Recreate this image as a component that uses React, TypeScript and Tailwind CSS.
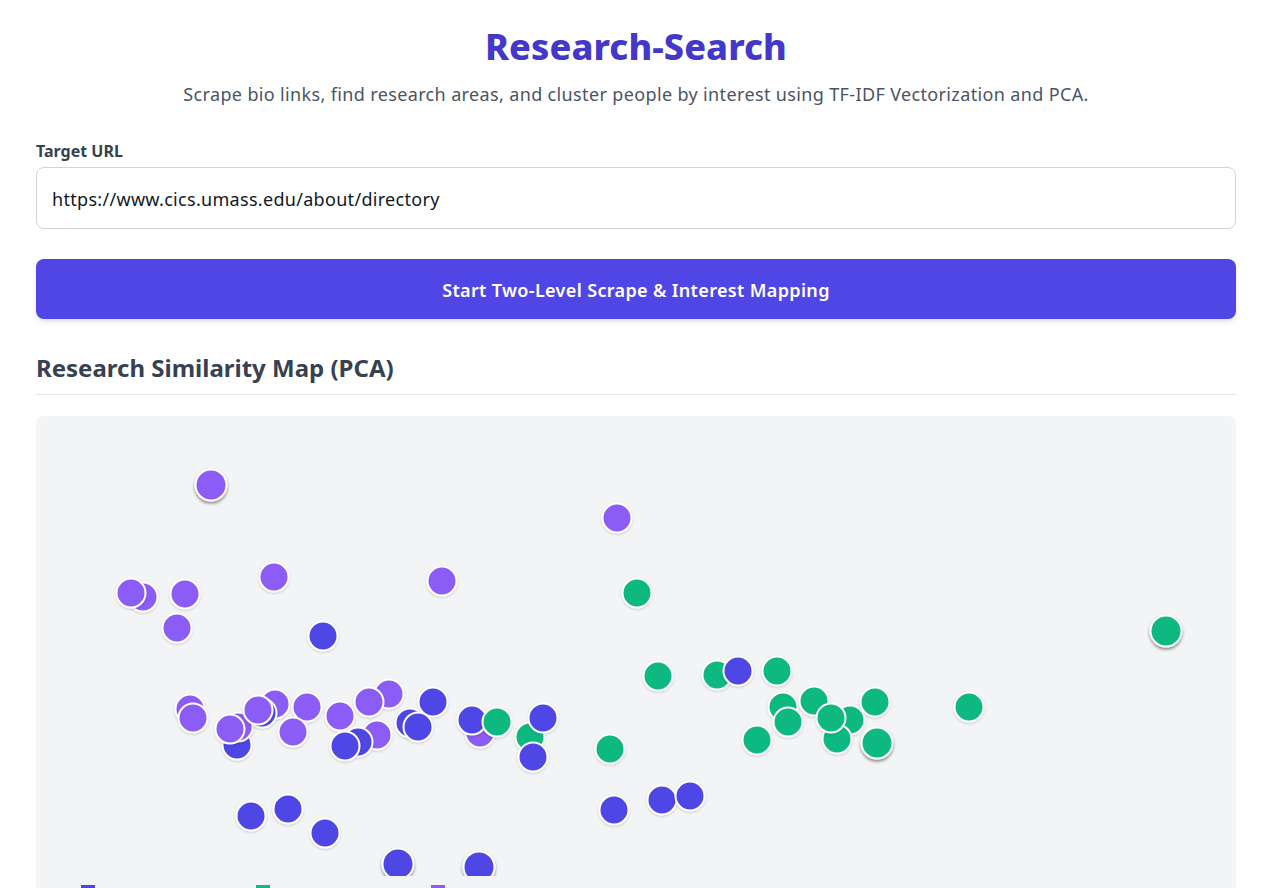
import React from "react";

type P = { x: number; y: number; c: "i" | "g" | "p"; s?: boolean };

const COLORS: Record<string, string> = { i: "#4f46e5", g: "#10b981", p: "#8b5cf6" };

// absolute page coordinates (converted below)
const points: P[] = [
  { x: 211, y: 485, c: "p", s: true },
  { x: 617, y: 518, c: "p" },
  { x: 274, y: 577, c: "p" },
  { x: 442, y: 581, c: "p" },
  { x: 143, y: 597, c: "p" },
  { x: 131, y: 593, c: "p" },
  { x: 185, y: 594, c: "p" },
  { x: 177, y: 628, c: "p" },
  { x: 323, y: 636, c: "i" },
  { x: 637, y: 593, c: "g" },
  { x: 1166, y: 631, c: "g", s: true },
  { x: 658, y: 676, c: "g" },
  { x: 969, y: 707, c: "g" },
  // left cluster
  { x: 237, y: 745, c: "i" },
  { x: 190, y: 709, c: "p" },
  { x: 193, y: 718, c: "p" },
  { x: 238, y: 727, c: "p" },
  { x: 230, y: 729, c: "p" },
  { x: 275, y: 704, c: "p" },
  { x: 262, y: 713, c: "i" },
  { x: 258, y: 710, c: "p" },
  { x: 307, y: 707, c: "p" },
  { x: 293, y: 732, c: "p" },
  { x: 340, y: 716, c: "p" },
  { x: 389, y: 694, c: "p" },
  { x: 369, y: 702, c: "p" },
  { x: 377, y: 735, c: "p" },
  { x: 358, y: 742, c: "i" },
  { x: 345, y: 746, c: "i" },
  { x: 433, y: 702, c: "i" },
  { x: 410, y: 723, c: "i" },
  { x: 418, y: 727, c: "i" },
  { x: 480, y: 733, c: "p" },
  { x: 472, y: 720, c: "i" },
  { x: 497, y: 722, c: "g" },
  { x: 530, y: 737, c: "g" },
  { x: 543, y: 718, c: "i" },
  { x: 533, y: 757, c: "i" },
  { x: 610, y: 749, c: "g" },
  // right cluster
  { x: 717, y: 675, c: "g" },
  { x: 738, y: 671, c: "i" },
  { x: 777, y: 671, c: "g" },
  { x: 783, y: 707, c: "g" },
  { x: 814, y: 701, c: "g" },
  { x: 850, y: 720, c: "g" },
  { x: 837, y: 739, c: "g" },
  { x: 831, y: 718, c: "g" },
  { x: 788, y: 722, c: "g" },
  { x: 875, y: 702, c: "g" },
  { x: 757, y: 740, c: "g" },
  { x: 877, y: 743, c: "g", s: true },
  // lower
  { x: 251, y: 816, c: "i" },
  { x: 288, y: 809, c: "i" },
  { x: 325, y: 833, c: "i" },
  { x: 398, y: 864, c: "i", s: true },
  { x: 479, y: 867, c: "i", s: true },
  { x: 614, y: 810, c: "i" },
  { x: 662, y: 800, c: "i" },
  { x: 690, y: 796, c: "i" },
];

const OX = 36;
const OY = 416;

function Scatter() {
  return (
    <svg width="1200" height="460" viewBox="0 0 1200 460" className="block">
      <defs>
        <filter id="soft" x="-50%" y="-50%" width="200%" height="200%">
          <feDropShadow dx="0" dy="1" stdDeviation="1" floodColor="#000" floodOpacity="0.18" />
        </filter>
        <filter id="strong" x="-50%" y="-50%" width="200%" height="200%">
          <feDropShadow dx="0" dy="2" stdDeviation="1.6" floodColor="#000" floodOpacity="0.45" />
        </filter>
      </defs>
      {points.map((p, i) => (
        <circle
          key={i}
          cx={p.x - OX}
          cy={p.y - OY}
          r={p.s ? 15.5 : 14.5}
          fill={COLORS[p.c]}
          stroke="#ffffff"
          strokeWidth={2}
          filter={p.s ? "url(#strong)" : "url(#soft)"}
        />
      ))}
    </svg>
  );
}

export default function App() {
  const font = { fontFamily: '"Noto Sans", "Open Sans", Arial, sans-serif' };
  return (
    <div className="min-h-screen bg-white" style={font}>
      <div className="ml-[36px] w-[1200px] pt-[27px]">
        <h1 className="text-center text-[36px] leading-[40px] font-extrabold text-[#4338ca] tracking-[0.1px]">
          Research-Search
        </h1>
        <p className="mt-[13px] text-center text-[18px] leading-[28px] text-[#4b5563] tracking-[0.36px]">
          Scrape bio links, find research areas, and cluster people by interest using TF-IDF Vectorization and PCA.
        </p>

        <label className="mt-[31px] block text-[16px] leading-[24px] font-bold text-[#374151]">Target URL</label>
        <div className="mt-[4px] flex h-[62px] items-center rounded-lg border border-[#d1d5db] bg-white px-[15px] pt-[3px] text-[18px] text-[#111827] tracking-[0.3px]">
          https://www.cics.umass.edu/about/directory
        </div>

        <button className="mt-[30px] flex h-[60px] w-full items-center justify-center rounded-lg bg-[#4f46e5] pt-[3px] text-[18px] font-semibold text-white shadow-md tracking-[0.35px]">
          Start Two-Level Scrape &amp; Interest Mapping
        </button>

        <h2 className="mt-[33px] border-b border-[#e5e7eb] pb-[10px] text-[24px] leading-[32px] font-bold text-[#374151]">
          Research Similarity Map (PCA)
        </h2>

        <div className="mt-[21px] rounded-lg bg-[#f3f4f6]">
          <Scatter />
          <div className="flex pl-[45px] pt-[9px] pb-6">
            {[
              ["#4f46e5", "Cluster 1"],
              ["#10b981", "Cluster 2"],
              ["#8b5cf6", "Cluster 3"],
            ].map(([c, l]) => (
              <div key={l} className="flex w-[175px] items-start gap-2 text-sm leading-5 text-[#374151]">
                <span className="block h-[14px] w-[14px] shrink-0" style={{ backgroundColor: c }} />
                <span className="pt-[4px]">{l}</span>
              </div>
            ))}
          </div>
        </div>
      </div>
    </div>
  );
}
